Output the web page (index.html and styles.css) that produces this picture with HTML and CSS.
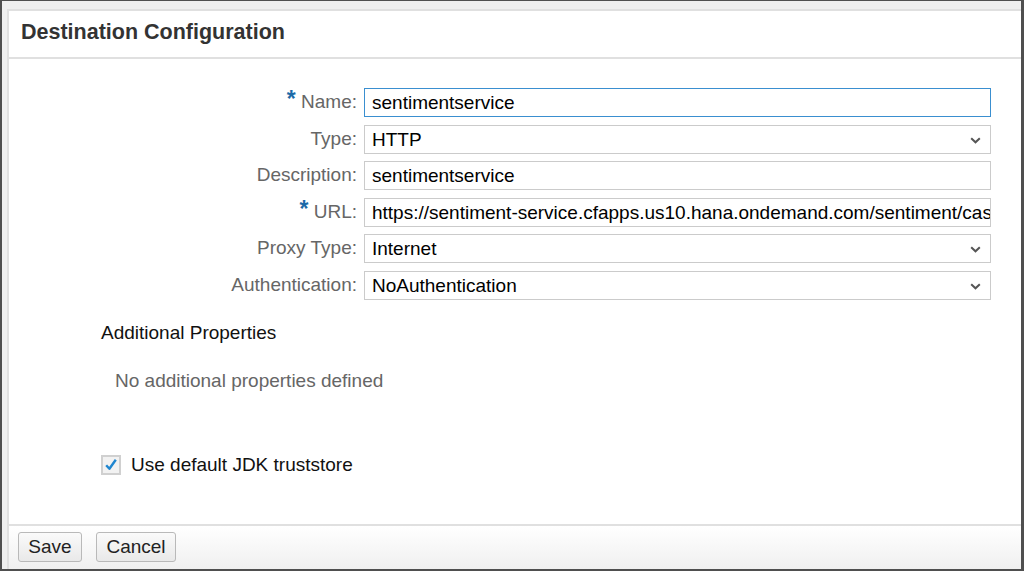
FILE: index.html
```html
<!DOCTYPE html>
<html lang="en">
<head>
<meta charset="utf-8">
<title>Destination Configuration</title>
<link rel="stylesheet" href="styles.css">
</head>
<body>
<div class="screen">
  <div class="panel">
    <div class="panel-header">
      <h1 class="title">Destination Configuration</h1>
    </div>
    <div class="panel-body">
      <div class="form">
        <label class="label"><span class="req">*</span> Name:</label>
        <div class="field focused">sentimentservice</div>

        <label class="label">Type:</label>
        <div class="field select">HTTP
          <svg class="chev" width="11" height="7" viewBox="0 0 11 7"><path d="M1.2 1.2 L5.5 5.3 L9.8 1.2" fill="none" stroke="#555" stroke-width="2"/></svg>
        </div>

        <label class="label">Description:</label>
        <div class="field">sentimentservice</div>

        <label class="label"><span class="req">*</span> URL:</label>
        <div class="field clip">https://sentiment-service.cfapps.us10.hana.ondemand.com/sentiment/case</div>

        <label class="label">Proxy Type:</label>
        <div class="field select">Internet
          <svg class="chev" width="11" height="7" viewBox="0 0 11 7"><path d="M1.2 1.2 L5.5 5.3 L9.8 1.2" fill="none" stroke="#555" stroke-width="2"/></svg>
        </div>

        <label class="label">Authentication:</label>
        <div class="field select">NoAuthentication
          <svg class="chev" width="11" height="7" viewBox="0 0 11 7"><path d="M1.2 1.2 L5.5 5.3 L9.8 1.2" fill="none" stroke="#555" stroke-width="2"/></svg>
        </div>
      </div>

      <div class="section">
        <div class="section-title">Additional Properties</div>
        <div class="empty">No additional properties defined</div>
        <div class="check-row">
          <span class="checkbox">
            <svg width="14" height="14" viewBox="0 0 14 14"><path d="M2.2 7.2 L5.4 10.8 L11.8 1.8" fill="none" stroke="#1f86d0" stroke-width="2.4" stroke-linejoin="round"/></svg>
          </span>
          <span class="check-label">Use default JDK truststore</span>
        </div>
      </div>
    </div>
    <div class="panel-footer">
      <button class="btn save">Save</button>
      <button class="btn cancel">Cancel</button>
    </div>
  </div>
</div>
</body>
</html>
```

FILE: styles.css
```css
html, body {
  margin: 0;
  padding: 0;
}
body {
  width: 1024px;
  height: 571px;
  box-sizing: border-box;
  background: #4f4f4f;
  padding: 1px 3px 2px 2px;
  font-family: "Liberation Sans", Arial, sans-serif;
  overflow: hidden;
}
.screen {
  height: 100%;
  box-sizing: border-box;
  background: #efefef;
  padding: 8px 0 0 5px;
  display: flex;
}
.panel {
  flex: 1;
  background: #fff;
  border-left: 2px solid #e0e0e0;
  border-top: 2px solid #e0e0e0;
  display: flex;
  flex-direction: column;
}
.panel-header {
  border-bottom: 2px solid #e0e0e0;
  display: flex;
  align-items: center;
  padding: 0 0 3px 12px;
  box-sizing: content-box;
  height: 43px;
}
.title {
  margin: 0;
  font-size: 21.5px;
  font-weight: bold;
  color: #333;
}
.panel-body {
  flex: 1;
  padding-top: 29px;
}
.form {
  display: grid;
  grid-template-columns: 348px 627px;
  column-gap: 7px;
  row-gap: 7.5px;
}
.label {
  font-size: 19px;
  color: #666;
  text-align: right;
  line-height: 27px;
  white-space: nowrap;
}
.req {
  color: #1c6aa8;
  font-weight: bold;
  font-size: 23px;
  line-height: 10px;
  position: relative;
  top: -1px;
}
.field {
  position: relative;
  height: 29px;
  box-sizing: border-box;
  border: 1px solid #cbcbcb;
  padding: 0 30px 0 7px;
  font-size: 19px;
  line-height: 27px;
  color: #000;
  white-space: nowrap;
  overflow: hidden;
  background: #fff;
}
.field.clip {
  padding-right: 4px;
}
.field.focused {
  border-color: #3a8fd0;
}
.chev {
  position: absolute;
  right: 9px;
  top: 11px;
}
.section {
  padding: 22px 0 0 92px;
}
.section-title {
  font-size: 19px;
  color: #111;
  line-height: 22px;
}
.empty {
  margin: 26px 0 0 14px;
  font-size: 19px;
  color: #666;
  line-height: 22px;
}
.check-row {
  margin-top: 62px;
  display: flex;
  align-items: center;
  gap: 10px;
}
.checkbox {
  width: 20px;
  height: 20px;
  box-sizing: border-box;
  border: 2px solid #d0d0d0;
  background: #f2f2f2;
  display: flex;
  align-items: center;
  justify-content: center;
}
.check-label {
  font-size: 19px;
  color: #111;
  line-height: 22px;
}
.panel-footer {
  border-top: 2px solid #e0e0e0;
  height: 45px;
  box-sizing: border-box;
  padding: 6px 0 0 9px;
  background: linear-gradient(#ffffff, #f0f0f0);
  display: flex;
  align-items: flex-start;
  gap: 14px;
}
.btn {
  height: 30px;
  border: 1px solid #b9b9b9;
  border-radius: 3px;
  background: linear-gradient(#fafafa, #e9e9e9);
  font-family: "Liberation Sans", Arial, sans-serif;
  font-size: 19px;
  color: #222;
  padding: 0;
}
.save { width: 64px; }
.cancel { width: 80px; }
```
